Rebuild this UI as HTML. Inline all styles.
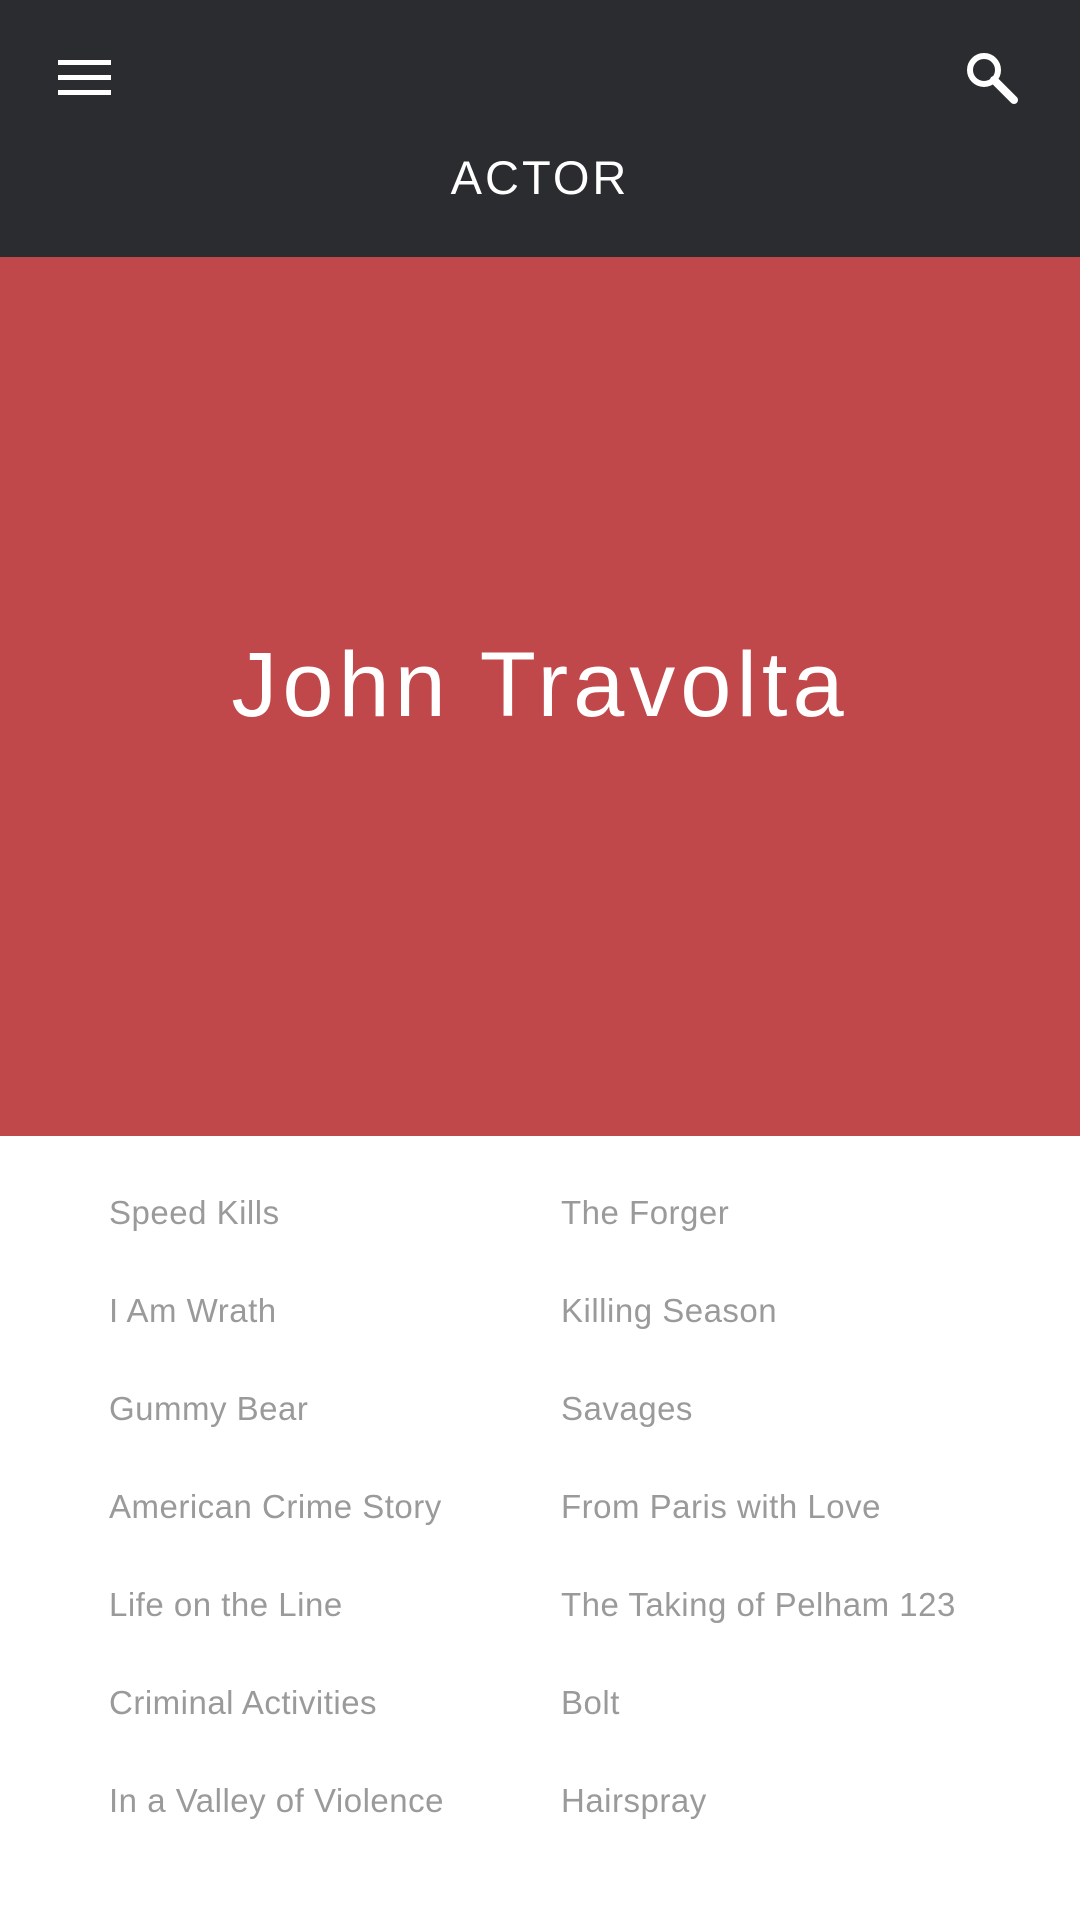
<!DOCTYPE html>
<html><head><meta charset="utf-8"><style>
*{margin:0;padding:0;box-sizing:border-box}
body{width:1080px;height:1920px;background:#fff;font-family:"Liberation Sans",sans-serif;position:relative;overflow:hidden}
.hdr{position:absolute;left:0;top:0;width:1080px;height:257px;background:#2b2c30}
.burger{position:absolute;left:58px;top:60px;width:53px}
.burger i{display:block;height:5px;background:#fff;margin-bottom:10px}
.title{position:absolute;left:0;width:1080px;top:150px;text-align:center;color:#fff;font-size:47px;letter-spacing:3px;line-height:56px}
.hero{position:absolute;left:0;top:257px;width:1080px;height:879px;background:#c0484a}
.name{position:absolute;left:0;width:1080px;top:630px;text-align:center;color:#fff;font-size:92px;letter-spacing:5px;line-height:110px}
.item{position:absolute;color:#9a9a9a;font-size:33px;line-height:40px;letter-spacing:0.5px}
</style></head><body>
<div class="hdr">
<div class="burger"><i></i><i></i><i></i></div>
<svg style="position:absolute;left:962px;top:48px" width="62" height="60" viewBox="0 0 62 60"><circle cx="22" cy="22" r="14" fill="none" stroke="#fff" stroke-width="6"/><line x1="32" y1="32" x2="52" y2="52" stroke="#fff" stroke-width="8" stroke-linecap="round"/></svg>
<div class="title">ACTOR</div>
</div>
<div class="hero"></div>
<div class="name">John Travolta</div>
<div class="item" style="left:109px;top:1193px">Speed Kills</div>
<div class="item" style="left:109px;top:1291px">I Am Wrath</div>
<div class="item" style="left:109px;top:1389px">Gummy Bear</div>
<div class="item" style="left:109px;top:1487px">American Crime Story</div>
<div class="item" style="left:109px;top:1585px">Life on the Line</div>
<div class="item" style="left:109px;top:1683px">Criminal Activities</div>
<div class="item" style="left:109px;top:1781px">In a Valley of Violence</div>
<div class="item" style="left:561px;top:1193px">The Forger</div>
<div class="item" style="left:561px;top:1291px">Killing Season</div>
<div class="item" style="left:561px;top:1389px">Savages</div>
<div class="item" style="left:561px;top:1487px">From Paris with Love</div>
<div class="item" style="left:561px;top:1585px">The Taking of Pelham 123</div>
<div class="item" style="left:561px;top:1683px">Bolt</div>
<div class="item" style="left:561px;top:1781px">Hairspray</div>
</body></html>
